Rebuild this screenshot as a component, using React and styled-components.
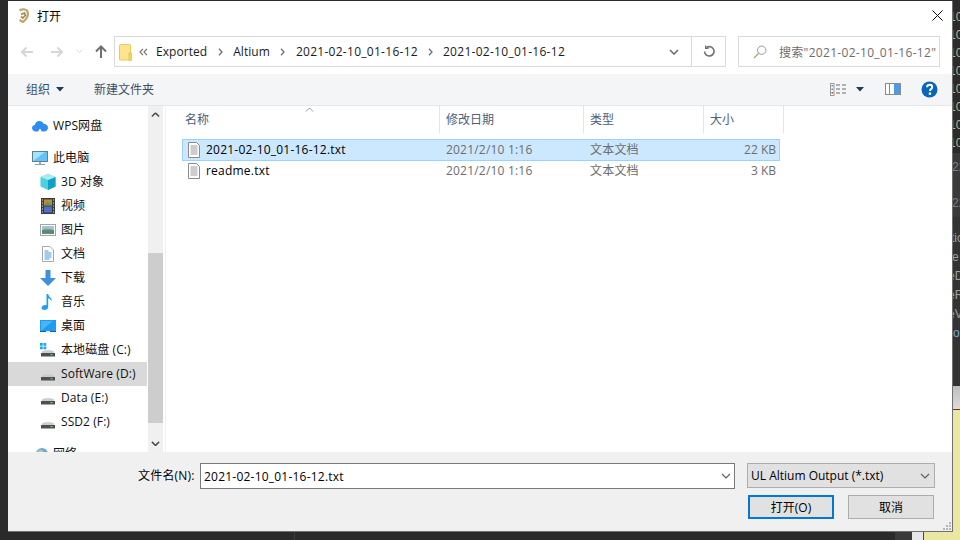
import React from 'react'
import styled, { createGlobalStyle } from 'styled-components'

const UI_FONT = '"Open Sans", "Noto Sans CJK SC", sans-serif'

const GlobalStyle = createGlobalStyle`
    html, body { margin: 0; padding: 0; background: #2b2b2b; }
    body { width: 960px; height: 540px; overflow: hidden; font-family: ${UI_FONT}; font-size: 12px; }
    * { box-sizing: border-box; }
`

const Desktop = styled.div`
    width: 960px;
    height: 540px;
    display: grid;
    grid-template-columns: 8px 945px 7px;
    grid-template-rows: 1px 531px 8px;
    background: #2b2b2b;
`

const Dialog = styled.div`
    grid-column: 2;
    grid-row: 2;
    position: relative;
    display: flex;
    flex-direction: column;
    background: #fff;
    border-right: 1px solid #6f6f6f;
    border-bottom: 1px solid #6f6f6f;
    color: #000;
`

/* editor window behind the dialog */
const BackStrip = styled.div`
    grid-column: 3;
    grid-row: 1 / 3;
    display: flex;
    flex-direction: column;
    overflow: hidden;
    background: #333;
    font-family: "Liberation Sans", sans-serif;
    font-size: 12px;
`
const BackLines = styled.div`
    height: 153px;
    padding-top: 8px;
    background: #2b2b2b;
    color: #b7b58c;
`
const BackLine = styled.div`
    height: ${p => p.$h || 18}px;
    line-height: ${p => p.$h || 18}px;
    text-indent: ${p => p.$indent ?? -4}px;
    white-space: nowrap;
    color: ${p => p.$color || 'inherit'};
`
const BackTabs = styled.div`
    height: 64px;
    padding-top: 5px;
    background: #3a3a3a;
    color: #77808a;
`
const BackCode = styled.div`
    height: 169px;
    padding-top: 12px;
    background: #333;
    color: #9aa4b0;
`
const BackGrey = styled.div`
    height: 24px;
    background: linear-gradient(#bdbdbd, #dcdcdc);
    border-bottom: 1px solid #7a2a2a;
`
const BackYellow = styled.div`
    flex: 1;
    background: #e9e7a3;
`
const BackBottom = styled.div`
    grid-column: 1 / 4;
    grid-row: 3;
    display: flex;
    background: #262626;
`
const BottomDark = styled.div`
    width: ${p => p.$w}px;
    background: ${p => p.$color || '#2a2a2a'};
`
const BottomWhite = styled.div`
    width: 12px;
    background: #e8e8e8;
    border-right: 1px solid #a52020;
`
const BottomYellow = styled.div`
    flex: 1;
    background: #e9e7a3;
`

const TitleBar = styled.div`
    height: 29px;
    flex: none;
    display: flex;
    align-items: center;
    padding-left: 10px;
    gap: 7px;
`
const TitleText = styled.span`
    font-size: 12px;
`
const CloseBtn = styled.div`
    margin-left: auto;
    width: 30px;
    height: 29px;
    display: flex;
    align-items: center;
    justify-content: center;
`

const NavBar = styled.div`
    height: 44px;
    flex: none;
    display: flex;
    align-items: flex-start;
    padding-top: 6px;
`
const NavButtons = styled.div`
    width: 106px;
    height: 31px;
    flex: none;
    display: flex;
    align-items: center;
    padding-left: 11px;
`
const NavSlot = styled.div`
    width: ${p => p.$w}px;
    display: flex;
    justify-content: center;
`
const AddressBox = styled.div`
    width: 612px;
    height: 31px;
    flex: none;
    display: flex;
    align-items: center;
    border: 1px solid #d9d9d9;
    padding-left: 4px;
`
const Crumbs = styled.div`
    flex: 1;
    display: flex;
    align-items: center;
    color: #1a1a1a;
    white-space: nowrap;
`
const CrumbArrows = styled.span`
    width: 24px;
    padding-left: 7px;
    display: flex;
`
const Crumb = styled.span`
    font-size: 12px;
    letter-spacing: ${p => (p.$num ? 0.28 : 0.05)}px;
`
const CrumbSep = styled.span`
    width: ${p => p.$w || 26}px;
    display: flex;
    justify-content: center;
`
const AddrCell = styled.div`
    height: 29px;
    width: ${p => p.$w}px;
    display: flex;
    align-items: center;
    justify-content: center;
    border-left: ${p => (p.$line ? '1px solid #d9d9d9' : 'none')};
`
const SearchBox = styled.div`
    width: 202px;
    height: 31px;
    margin-left: 12px;
    flex: none;
    display: flex;
    align-items: center;
    padding-left: 14px;
    gap: 12px;
    border: 1px solid #d9d9d9;
    color: #6d6d6d;
    white-space: nowrap;
    overflow: hidden;
    letter-spacing: 0.3px;
`

const Toolbar = styled.div`
    height: 32px;
    flex: none;
    display: flex;
    align-items: center;
    background: #f4f5f7;
    border-bottom: 1px solid #e6e6e6;
    padding-left: 18px;
    padding-bottom: 1px;
    color: #3a5069;
`
const ToolButton = styled.div`
    display: flex;
    align-items: center;
    gap: 6px;
    margin-right: 30px;
`
const ToolRight = styled.div`
    margin-left: auto;
    display: flex;
    align-items: center;
    padding-right: 14px;
`
const ToolIcon = styled.div`
    display: flex;
    align-items: center;
    margin-left: ${p => p.$gap}px;
`

const Main = styled.div`
    flex: 1;
    min-height: 0;
    display: flex;
`
const Sidebar = styled.div`
    width: 140px;
    flex: none;
    padding-top: 8px;
    overflow: hidden;
`
const TreeRow = styled.div`
    height: 24px;
    display: flex;
    align-items: center;
    gap: 5px;
    margin-right: 1px;
    padding-left: ${p => (p.$top ? 24 : 32)}px;
    margin-bottom: ${p => (p.$gapBelow ? 8 : 0)}px;
    background: ${p => (p.$active ? '#d9d9d9' : 'transparent')};
    color: #111;
    white-space: nowrap;
    letter-spacing: 0.08px;
`
const TreeLabel = styled.span`
    margin-top: -2px;
`
const TreeIcon = styled.span`
    width: 16px;
    height: 16px;
    flex: none;
    display: flex;
`
const ScrollBar = styled.div`
    width: 15px;
    flex: none;
    display: flex;
    flex-direction: column;
    background: #f0f0f0;
`
const ScrollEnd = styled.div`
    height: 17px;
    flex: none;
    display: flex;
    align-items: center;
    justify-content: center;
`
const ScrollSpace = styled.div`
    height: ${p => p.$h}px;
    flex: none;
    background: ${p => p.$color || 'transparent'};
`
const PaneLine = styled.div`
    width: 3px;
    flex: none;
    border-right: 1px solid #f0f0f0;
`
const FilePane = styled.div`
    flex: 1;
    position: relative;
    padding-left: 16px;
`
const SortCaret = styled.div`
    position: absolute;
    left: 139px;
    top: 1px;
    display: flex;
`
const FileHeader = styled.div`
    height: 27px;
    display: grid;
    grid-template-columns: 258px 144px 120px 80px;
    color: #4c607a;
    margin-bottom: 6px;
`
const HeaderCell = styled.div`
    display: flex;
    align-items: center;
    padding-left: ${p => (p.$first ? 3 : 6)}px;
    padding-bottom: 1px;
    border-right: 1px solid #e5e5e5;
`
const FileRow = styled.div`
    height: ${p => (p.$selected ? 22 : 20)}px;
    width: 598px;
    display: grid;
    grid-template-columns: 257px 144px 120px 1fr;
    align-items: center;
    background: ${p => (p.$selected ? '#cce8ff' : 'transparent')};
    box-shadow: ${p => (p.$selected ? 'inset 0 0 0 1px #99d1ff' : 'none')};
    color: #6d6d6d;
`
const NameCell = styled.div`
    display: flex;
    align-items: center;
    gap: 4px;
    padding-left: 6px;
    color: #000;
    letter-spacing: 0.22px;
`
const NameText = styled.span`
    margin-top: -2px;
`
const DataCell = styled.div`
    padding-left: 7px;
    padding-bottom: 2px;
    letter-spacing: 0.2px;
`
const SizeCell = styled.div`
    text-align: right;
    padding-right: 4px;
    padding-bottom: 2px;
`

const Footer = styled.div`
    height: 79px;
    flex: none;
    background: #f0f0f0;
    padding: 11px 17px 0 130px;
`
const FileLineRow = styled.div`
    display: flex;
    align-items: flex-start;
`
const FileLabel = styled.label`
    width: 62px;
    flex: none;
    height: 26px;
    line-height: 26px;
    white-space: nowrap;
    letter-spacing: 0.2px;
`
const NameInput = styled.div`
    width: 535px;
    flex: none;
    height: 26px;
    display: flex;
    align-items: center;
    justify-content: space-between;
    padding: 0 3px;
    background: #fff;
    border: 1px solid #7a7a7a;
    letter-spacing: 0.22px;
`
const TypeSelect = styled.div`
    width: 188px;
    flex: none;
    height: 25px;
    margin-left: 12px;
    display: flex;
    align-items: center;
    justify-content: space-between;
    padding: 0 4px 0 3px;
    background: #e1e1e1;
    border: 1px solid #adadad;
`
const ButtonRow = styled.div`
    display: flex;
    justify-content: flex-end;
    gap: 14px;
    margin-top: 6px;
    margin-right: 1px;
`
const DialogButton = styled.div`
    width: 86px;
    height: 24px;
    display: flex;
    align-items: center;
    justify-content: center;
    background: #e1e1e1;
    border: ${p => (p.$primary ? '2px solid #0078d7' : '1px solid #adadad')};
`
const Grip = styled.div`
    position: absolute;
    right: 1px;
    bottom: 1px;
    display: flex;
`

const Arrow = ({ flip, color }) => (
    <svg width="14" height="12" viewBox="0 0 14 12" fill="none" stroke={color} strokeWidth="2" style={{ transform: flip ? 'scaleX(-1)' : 'none' }}>
        <path d="M13 6H2M6.500 1.500 2 6l4.500 4.500" />
    </svg>
)

const Chevron = ({ color = '#6d6d6d', w = 10, up, sw = 1.2 }) => (
    <svg width={w} height={w * 0.6} viewBox="0 0 10 6" fill="none" stroke={color} strokeWidth={sw} style={{ transform: up ? 'scaleY(-1)' : 'none' }}>
        <path d="M1 1l4 4 4-4" />
    </svg>
)

const Caret = ({ color = '#1f3a5c' }) => (
    <svg width="8" height="5" viewBox="0 0 8 5"><path d="M0 0h8L4 4.500z" fill={color} /></svg>
)

const SepArrow = () => (
    <svg width="5" height="8" viewBox="0 0 5 8" fill="none" stroke="#707070" strokeWidth="1.3"><path d="M1 .8 4 4 1 7.200" /></svg>
)

const FolderIcon = () => (
    <svg width="13" height="17" viewBox="0 0 13 17" style={{ marginTop: 1 }}>
        <rect x=".5" y=".5" width="11" height="15.500" rx="1" fill="#ffe38f" stroke="#e8c95a" />
        <rect x="10" y="9" width="2.500" height="7.500" fill="#f5d56e" stroke="#e0bb45" strokeWidth=".7" />
    </svg>
)

const AppLogo = () => (
    <svg width="12" height="15" viewBox="0 0 12 15" fill="none" style={{ marginTop: -1 }}>
        <path d="M1.500 2.500C4 .8 7.500 1 9 2.500c1.500 3 1 6-1 8.500l-3 3-3.500-2" stroke="#bfa870" strokeWidth="2.300" />
        <path d="M3 6.300l3.500-1.300.8 2.300L4.800 10 3 8.500" stroke="#a98f55" strokeWidth="1.800" />
    </svg>
)

const Refresh = () => (
    <svg width="12" height="13" viewBox="0 0 12 13" fill="none" stroke="#707070" strokeWidth="1.600">
        <path d="M3.400 2.600A4.700 4.700 0 1 1 1.600 6.400" />
        <path d="M2.600 .4v3h3" strokeWidth="1.200" />
    </svg>
)

const SearchIcon = () => (
    <svg width="14" height="14" viewBox="0 0 14 14" fill="none" stroke="#9a9a9a" strokeWidth="1">
        <circle cx="8.700" cy="5.200" r="4.200" />
        <path d="M5.600 8.200 1 13" stroke="#b99f80" strokeWidth="1.300" />
    </svg>
)

const ViewIcon = () => (
    <svg width="17" height="13" viewBox="0 0 17 13">
        <rect x=".5" y=".5" width="3.500" height="12" fill="#f8f8f8" stroke="#9a9a9a" />
        <rect x="1.500" y="2" width="1.500" height="1.500" fill="#6a88b5" />
        <rect x="1.500" y="5.500" width="1.500" height="1.500" fill="#6a88b5" />
        <rect x="1.500" y="9" width="1.500" height="1.500" fill="#d03a3a" />
        <path d="M6 2h4m2 0h4M6 6h4m2 0h4M6 10h4m2 0h4" stroke="#6d6d6d" />
    </svg>
)

const PaneIcon = () => (
    <svg width="16" height="12" viewBox="0 0 16 12">
        <rect x=".5" y=".5" width="15" height="11" fill="#fff" stroke="#8a8a8a" />
        <rect x="9" y="1" width="6" height="10" fill="#4a9be8" />
        <rect x="4" y="1" width="1" height="10" fill="#8a8a8a" />
    </svg>
)

const HelpIcon = () => (
    <svg width="17" height="17" viewBox="0 0 17 17">
        <circle cx="8.500" cy="8.500" r="8" fill="#0a64b8" />
        <path d="M6 6.300c.2-3.300 5.200-3.200 5.200-.1 0 1.800-2.200 2-2.200 3.800" fill="none" stroke="#fff" strokeWidth="2" />
        <rect x="7.800" y="11.500" width="2.300" height="2.300" fill="#fff" />
    </svg>
)

const CloudIcon = () => (
    <svg width="16" height="16" viewBox="0 0 16 16">
        <path d="M4 13.500C1.600 13.500 0 12 0 10.100 0 8.400 1.200 7.100 2.800 6.900 3.300 4.400 5.200 3 7.400 3c2 0 3.600 1.100 4.200 2.800 2.500 0 4.400 1.700 4.400 3.900 0 2.200-1.700 3.800-4 3.800H9.600L8 10.800 6.200 13.500z" fill="#2f8cf0" />
        <path d="M6.200 13.500 8 10.800l1.600 2.700z" fill="#fff" />
    </svg>
)

const MonitorIcon = () => (
    <svg width="16" height="16" viewBox="0 0 16 16">
        <rect x=".5" y="1.500" width="15" height="10" fill="#63c3f5" stroke="#5f7f95" />
        <path d="M1 11 13 2H1z" fill="#a4e2fb" />
        <path d="M7 12h2v2H7z" fill="#9aa7b0" />
        <path d="M3 14.500h10" stroke="#8aa0ae" />
    </svg>
)

const CubeIcon = () => (
    <svg width="16" height="16" viewBox="0 0 16 16">
        <path d="M8 0l7.500 3v9.500L8 16 .5 12.500V3z" fill="#4fd0de" />
        <path d="M8 6v10l7.500-3.500V3z" fill="#0f9fc9" />
        <path d="M.5 3 8 6l7.500-3L8 0z" fill="#a6ecef" />
    </svg>
)

const FilmIcon = () => (
    <svg width="16" height="16" viewBox="0 0 16 16">
        <rect x="1" y="0" width="14" height="16" fill="#3b3b3b" />
        <rect x="4" y="1.500" width="8" height="6" fill="#c98a3a" />
        <rect x="4" y="8.500" width="8" height="6" fill="#4f6fc4" />
        <path d="M5 6l2-3 2 2 2-1v3H5z" fill="#59a34d" />
        <path d="M2 2h1M2 5h1M2 8h1M2 11h1M2 14h1M13 2h1M13 5h1M13 8h1M13 11h1M13 14h1" stroke="#e8e8e8" />
    </svg>
)

const PictureIcon = () => (
    <svg width="16" height="16" viewBox="0 0 16 16">
        <rect x=".5" y="2.500" width="15" height="11" fill="#fff" stroke="#a3a3a3" />
        <rect x="2" y="4" width="12" height="4" fill="#9fc4dc" />
        <rect x="2" y="8" width="12" height="4" fill="#5d8a74" />
        <path d="M2 8c3-2 7-1.500 12 0z" fill="#7fa197" />
    </svg>
)

const DocIcon = () => (
    <svg width="16" height="16" viewBox="0 0 16 16">
        <path d="M2.500.5H10L13.500 4v11.500h-11z" fill="#fff" stroke="#a8a8a8" />
        <path d="M4.500 5h4M4.500 7h7M4.500 9h7M4.500 11h7M4.500 13h5" stroke="#3f9ae0" />
    </svg>
)

const DownIcon = () => (
    <svg width="16" height="16" viewBox="0 0 16 16">
        <path d="M5.500 0h5v8H16l-8 8-8-8h5.500z" fill="#3d8fe0" />
    </svg>
)

const NoteIcon = () => (
    <svg width="16" height="16" viewBox="0 0 16 16">
        <path d="M6.500 0h1.700c.2 3 4.300 3.500 3.300 7.500-.6-2-2-3-3.300-3.200V13c0 2-2 3-4 3-1.700 0-2.700-1-2.700-2.200C1.500 12.200 3.500 11 5.200 11c.5 0 1 .1 1.300.2z" fill="#1fa0ef" />
    </svg>
)

const DesktopIcon = () => (
    <svg width="16" height="16" viewBox="0 0 16 16">
        <rect x="0" y="2" width="16" height="12" fill="#1f9cf0" />
        <path d="M1 13 13 3H1z" fill="#46b4f5" />
        <path d="M0 13.500h16" stroke="#0f5fa8" />
        <path d="M6 13.500h4" stroke="#e8f4ff" />
    </svg>
)

const DriveIcon = ({ win }) => (
    <svg width="16" height="16" viewBox="0 0 16 16">
        {win && <path d="M0 1h2.800v2.800H0zM3.500 1h2.800v2.800H3.500zM0 4.500h2.800v2.800H0zM3.500 4.500h2.800v2.800H3.500z" fill="#1fa5ee" />}
        <path d="M2 9.500C3 7.800 13 7.800 14 9.500V11H2z" fill="#c9cdd0" />
        <rect x="1" y="11" width="14" height="3.500" fill="#505050" />
        <rect x="10.500" y="12" width="2" height="1.300" fill="#46d06a" />
    </svg>
)

const GlobeIcon = () => (
    <svg width="16" height="16" viewBox="0 0 16 16">
        <circle cx="10" cy="8" r="6" fill="#6aa7dc" />
        <path d="M6 5c2-2 4-1 5 0s0 3-2 3-2 3-3 1z" fill="#b6c9a8" />
    </svg>
)

const GripIcon = () => (
    <svg width="8" height="8" viewBox="0 0 8 8" fill="#b5b5b5">
        <path d="M6 0h2v2H6zM3 3h2v2H3zM6 3h2v2H6zM0 6h2v2H0zM3 6h2v2H3zM6 6h2v2H6z" />
    </svg>
)

const TxtIcon = () => (
    <svg width="16" height="16" viewBox="0 0 16 16" style={{ marginLeft: -2 }}>
        <path d="M2.500.5H10.500L13.500 3.500v12h-11z" fill="#fff" stroke="#8a8a8a" />
        <path d="M4.500 4h7M4.500 6h7M4.500 8h7M4.500 10h7M4.500 12h7" stroke="#9a9a9a" />
    </svg>
)

const TREE = [
    { label: 'WPS网盘', icon: <CloudIcon />, top: true, gapBelow: true },
    { label: '此电脑', icon: <MonitorIcon />, top: true },
    { label: '3D 对象', icon: <CubeIcon /> },
    { label: '视频', icon: <FilmIcon /> },
    { label: '图片', icon: <PictureIcon /> },
    { label: '文档', icon: <DocIcon /> },
    { label: '下载', icon: <DownIcon /> },
    { label: '音乐', icon: <NoteIcon /> },
    { label: '桌面', icon: <DesktopIcon /> },
    { label: '本地磁盘 (C:)', icon: <DriveIcon win /> },
    { label: 'SoftWare (D:)', icon: <DriveIcon />, active: true },
    { label: 'Data (E:)', icon: <DriveIcon /> },
    { label: 'SSD2 (F:)', icon: <DriveIcon />, gapBelow: true },
    { label: '网络', icon: <GlobeIcon />, top: true },
]

const FILES = [
    { name: '2021-02-10_01-16-12.txt', date: '2021/2/10 1:16', type: '文本文档', size: '22 KB', selected: true },
    { name: 'readme.txt', date: '2021/2/10 1:16', type: '文本文档', size: '3 KB' },
]

const CRUMBS = ['Exported', 'Altium', '2021-02-10_01-16-12', '2021-02-10_01-16-12']

const App = () => {
    return (
        <Desktop>
            <GlobalStyle />
            <Dialog>
                <TitleBar>
                    <AppLogo />
                    <TitleText>打开</TitleText>
                    <CloseBtn>
                        <svg width="11" height="11" viewBox="0 0 11 11" stroke="#111" strokeWidth="1"><path d="M.5.5l10 10M10.500.5l-10 10" /></svg>
                    </CloseBtn>
                </TitleBar>

                <NavBar>
                    <NavButtons>
                        <NavSlot $w={16}><Arrow color="#d6d6d6" /></NavSlot>
                        <NavSlot $w={14} />
                        <NavSlot $w={16}><Arrow color="#d6d6d6" flip /></NavSlot>
                        <NavSlot $w={7} />
                        <NavSlot $w={14}><Chevron color="#d0d0d0" w={7} /></NavSlot>
                        <NavSlot $w={8} />
                        <NavSlot $w={14}>
                            <svg width="12" height="13" viewBox="0 0 12 13" fill="none" stroke="#707070" strokeWidth="2"><path d="M6 13V2M1 6.500 6 1.500l5 5" /></svg>
                        </NavSlot>
                    </NavButtons>
                    <AddressBox>
                        <Crumbs>
                            <FolderIcon />
                            <CrumbArrows>
                                <svg width="9" height="8" viewBox="0 0 9 8" fill="none" stroke="#707070" strokeWidth="1.200"><path d="M4 .8 1 4l3 3.200M8 .8 5 4l3 3.200" /></svg>
                            </CrumbArrows>
                            {CRUMBS.map((c, i) => (
                                <React.Fragment key={i}>
                                    <Crumb $num={i > 1}>{c}</Crumb>
                                    {i < CRUMBS.length - 1 && <CrumbSep $w={i === 2 ? 25 : 26}><SepArrow /></CrumbSep>}
                                </React.Fragment>
                            ))}
                        </Crumbs>
                        <AddrCell $w={34}><Chevron sw={1.600} w={10} /></AddrCell>
                        <AddrCell $w={34} $line><Refresh /></AddrCell>
                    </AddressBox>
                    <SearchBox>
                        <SearchIcon />
                        <span>搜索"2021-02-10_01-16-12"</span>
                    </SearchBox>
                </NavBar>

                <Toolbar>
                    <ToolButton>组织 <Caret /></ToolButton>
                    <ToolButton>新建文件夹</ToolButton>
                    <ToolRight>
                        <ToolIcon $gap={0}><ViewIcon /></ToolIcon>
                        <ToolIcon $gap={9}><Caret /></ToolIcon>
                        <ToolIcon $gap={21}><PaneIcon /></ToolIcon>
                        <ToolIcon $gap={20}><HelpIcon /></ToolIcon>
                    </ToolRight>
                </Toolbar>

                <Main>
                    <Sidebar>
                        {TREE.map(t => (
                            <TreeRow key={t.label} $top={t.top} $gapBelow={t.gapBelow} $active={t.active}>
                                <TreeIcon>{t.icon}</TreeIcon>
                                <TreeLabel>{t.label}</TreeLabel>
                            </TreeRow>
                        ))}
                    </Sidebar>
                    <ScrollBar>
                        <ScrollEnd><Chevron up w={9} sw={1.800} color="#505050" /></ScrollEnd>
                        <ScrollSpace $h={130} />
                        <ScrollSpace $h={170} $color="#cdcdcd" />
                        <ScrollSpace $h={12} />
                        <ScrollEnd><Chevron w={9} sw={1.800} color="#505050" /></ScrollEnd>
                    </ScrollBar>
                    <PaneLine />
                    <FilePane>
                        <SortCaret><Chevron up w={9} sw={1} color="#8a8a8a" /></SortCaret>
                        <FileHeader>
                            <HeaderCell $first>名称</HeaderCell>
                            <HeaderCell>修改日期</HeaderCell>
                            <HeaderCell>类型</HeaderCell>
                            <HeaderCell>大小</HeaderCell>
                        </FileHeader>
                        {FILES.map(f => (
                            <FileRow key={f.name} $selected={f.selected}>
                                <NameCell><TxtIcon /><NameText>{f.name}</NameText></NameCell>
                                <DataCell>{f.date}</DataCell>
                                <DataCell>{f.type}</DataCell>
                                <SizeCell>{f.size}</SizeCell>
                            </FileRow>
                        ))}
                    </FilePane>
                </Main>

                <Footer>
                    <FileLineRow>
                        <FileLabel>文件名(N):</FileLabel>
                        <NameInput>
                            <span>2021-02-10_01-16-12.txt</span>
                            <Chevron w={10} color="#606060" />
                        </NameInput>
                        <TypeSelect>
                            <span>UL Altium Output (*.txt)</span>
                            <Chevron w={10} color="#606060" />
                        </TypeSelect>
                    </FileLineRow>
                    <ButtonRow>
                        <DialogButton $primary>打开(O)</DialogButton>
                        <DialogButton>取消</DialogButton>
                    </ButtonRow>
                </Footer>
                <Grip><GripIcon /></Grip>
            </Dialog>

            <BackStrip>
                <BackLines>
                    {Array.from({ length: 8 }).map((_, i) => <BackLine key={i}>10</BackLine>)}
                </BackLines>
                <BackTabs>
                    <BackLine $indent={-1}>22</BackLine>
                    <BackLine />
                    <BackLine $indent={-1}>22</BackLine>
                </BackTabs>
                <BackCode>
                    <BackLine $h={19} $indent={-2}>tic</BackLine>
                    <BackLine $h={19} $indent={-1}>e S</BackLine>
                    <BackLine $h={19} $indent={-5}>eD</BackLine>
                    <BackLine $h={19} $indent={-5}>eR</BackLine>
                    <BackLine $h={19} $indent={-5}>eV</BackLine>
                    <BackLine $h={19} $indent={0} $color="#7aa7d8">o</BackLine>
                </BackCode>
                <BackGrey />
                <BackYellow />
            </BackStrip>
            <BackBottom>
                <BottomDark $w={294} />
                <BottomDark $w={1} $color="#3a3a3a" />
                <BottomDark $w={600} />
                <BottomDark $w={17} $color="#3a3a3a" />
                <BottomWhite />
                <BottomYellow />
            </BackBottom>
        </Desktop>
    )
}

export default App
